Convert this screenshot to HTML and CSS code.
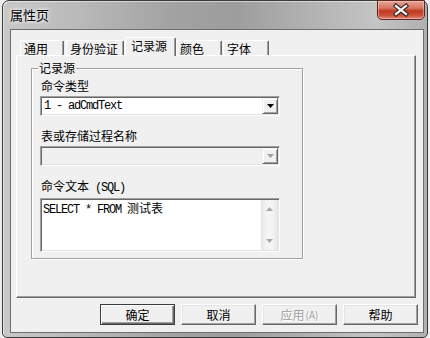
FILE: index.html
```html
<!DOCTYPE html>
<html lang="zh-CN">
<head>
    <meta charset="UTF-8">
    <title>属性页</title>
    <link rel="stylesheet" href="styles.css">
</head>
<body>
    <div class="window">
        <div class="titlebar">
            <span class="title">属性页</span>
            <div class="close">
                <svg width="46" height="18" viewBox="0 0 46 18">
                    <path d="M18 5 L28 13 M28 5 L18 13" stroke="#3a2a2a" stroke-width="4.5" stroke-linecap="square" fill="none"/>
                    <path d="M18 5 L28 13 M28 5 L18 13" stroke="#ffffff" stroke-width="2.2" stroke-linecap="square" fill="none"/>
                </svg>
            </div>
        </div>

        <div class="client">
            <div class="tabs">
                <div class="tab t1">通用</div>
                <div class="tab t2">身份验证</div>
                <div class="tab t3 active">记录源</div>
                <div class="tab t4">颜色</div>
                <div class="tab t5">字体</div>
            </div>

            <div class="panel">
                <div class="group">
                    <span class="group-title">记录源</span>

                    <div class="label">命令类型</div>
                    <div class="combo">
                        <div class="combo-text mono">1 - adCmdText</div>
                        <div class="drop">
                            <svg width="7" height="4" viewBox="0 0 7 4"><polygon points="0,0 7,0 3.5,4" fill="#000"/></svg>
                        </div>
                    </div>

                    <div class="label gap">表或存储过程名称</div>
                    <div class="combo disabled">
                        <div class="combo-text"></div>
                        <div class="drop">
                            <svg width="7" height="4" viewBox="0 0 7 4"><polygon points="0,0 7,0 3.5,4" fill="#a0a0a0"/></svg>
                        </div>
                    </div>

                    <div class="label gap">命令文本<span class="mono"> (SQL)</span></div>
                    <div class="memo">
                        <div class="memo-text"><span class="mono">SELECT * FROM </span>测试表</div>
                        <div class="scroll">
                            <svg width="7" height="4" viewBox="0 0 7 4"><polygon points="3.5,0 7,4 0,4" fill="#a8a8a8"/></svg>
                            <svg width="7" height="4" viewBox="0 0 7 4"><polygon points="0,0 7,0 3.5,4" fill="#a8a8a8"/></svg>
                        </div>
                    </div>
                </div>
            </div>

            <div class="buttons">
                <div class="btn default">确定</div>
                <div class="btn">取消</div>
                <div class="btn disabled">应用<span class="small">(A)</span></div>
                <div class="btn">帮助</div>
            </div>
        </div>
    </div>
</body>
</html>
```

FILE: styles.css
```css
* {
    box-sizing: border-box;
    margin: 0;
    padding: 0;
}

body {
    width: 430px;
    height: 338px;
    overflow: hidden;
    background: #ededed;
    font-family: "Noto Sans CJK SC", sans-serif;
    font-size: 12px;
    color: #000;
}

.mono {
    font-family: "Liberation Mono", "Noto Sans CJK SC", monospace;
    letter-spacing: -1.2px;
}

/* window frame */
.window {
    margin-left: 2px;
    width: 426px;
    height: 338px;
    border: 1px solid #3a3a3a;
    border-radius: 7px 7px 5px 5px;
    background: linear-gradient(90deg, #c8c8c8 0%, #b9b9b9 18%, #a2a2a2 40%, #9d9d9d 55%, #b5b5b5 75%, #c4c4c4 88%, #b0b0b0 100%);
    box-shadow: inset 1px 1px rgba(255, 255, 255, 0.5);
    display: flex;
    flex-direction: column;
}

.titlebar {
    height: 28px;
    display: flex;
    justify-content: space-between;
    align-items: flex-start;
}

.title {
    padding: 6px 0 0 7px;
    font-size: 13px;
    line-height: 15px;
    text-shadow: 0 0 5px #fff, 0 0 3px #fff;
}

.close {
    width: 48px;
    height: 20px;
    margin: -1px 2px 0 0;
    border: 1px solid #5a2820;
    border-radius: 0 0 5px 5px;
    background: linear-gradient(#e6a493 0%, #d57560 40%, #c0391f 55%, #cb533a 80%, #e08b74 100%);
    box-shadow: inset 0 0 0 1px rgba(255, 220, 210, 0.45);
}

.close svg {
    display: block;
}

.client {
    margin: 0 3px 0 7px;
    height: 304px;
    border: 1px solid #6e6e6e;
    background: #f0f0f0;
    padding: 7px 5px 0 5px;
}

/* tabs */
.tabs {
    height: 18px;
    display: flex;
    align-items: flex-end;
}

.tab {
    height: 15px;
    border: 1px solid;
    border-color: #fff #696969 transparent #fff;
    border-bottom: none;
    border-radius: 2px 2px 0 0;
    box-shadow: inset -1px 0 #a0a0a0;
    padding: 1px 0 0 3px;
    line-height: 13px;
    white-space: nowrap;
}

.t1 { width: 44px; margin-left: 4px; }
.t2 { width: 58px; margin-left: 2px; }
.t3 { width: 51px; margin-left: 1px; }
.t4 { width: 46px; }
.t5 { width: 46px; margin-left: 1px; }

.tab.active {
    height: 19px;
    margin-bottom: -1px;
    position: relative;
    z-index: 1;
    background: #f0f0f0;
    padding: 1px 0 0 5px;
}

.panel {
    width: 400px;
    height: 243px;
    border: 1px solid;
    border-color: #fff #696969 #696969 #fff;
    box-shadow: inset -1px -1px #a0a0a0;
    overflow: hidden;
}

/* group box */
.group {
    position: relative;
    margin: 12px 0 0 14px;
    width: 272px;
    height: 191px;
    border: 1px solid #a0a0a0;
    box-shadow: inset 1px 1px #fff, 1px 1px #fff;
    padding: 10px 0 0 8px;
}

.group-title {
    position: absolute;
    top: -8px;
    left: 6px;
    padding: 0 1px;
    background: #f0f0f0;
    line-height: 14px;
}

.label {
    margin-left: 1px;
    height: 14px;
    line-height: 14px;
    white-space: pre;
}

.label.gap {
    margin-top: 13px;
}

.combo,
.memo {
    width: 240px;
    display: flex;
    background: #fff;
    border: 1px solid;
    border-color: #a0a0a0 #fff #fff #a0a0a0;
    box-shadow: inset 1px 1px #696969, inset -1px -1px #e3e3e3;
    padding: 1px;
}

.combo {
    height: 20px;
    margin-top: 3px;
}

.combo.disabled {
    background: #f0f0f0;
}

.combo-text {
    flex: 1;
    padding-left: 2px;
    line-height: 16px;
    white-space: pre;
}

.drop {
    width: 16px;
    height: 16px;
    background: #f0f0f0;
    border: 1px solid;
    border-color: #f0f0f0 #696969 #696969 #f0f0f0;
    box-shadow: inset 1px 1px #fff, inset -1px -1px #a0a0a0;
    display: flex;
    align-items: center;
    justify-content: center;
}

.memo {
    height: 54px;
    margin-top: 5px;
}

.memo-text {
    flex: 1;
    padding: 1px 0 0 1px;
    line-height: 14px;
    white-space: pre;
}

.scroll {
    width: 17px;
    padding: 7px 0;
    display: flex;
    flex-direction: column;
    justify-content: space-between;
    align-items: center;
    background: linear-gradient(90deg, #e6e6e6 0%, #f4f4f4 35%, #f4f4f4 65%, #e6e6e6 100%);
}

/* bottom buttons */
.buttons {
    display: flex;
    justify-content: flex-end;
    gap: 6px;
    margin-top: 6px;
}

.btn {
    width: 75px;
    height: 21px;
    background: #f0f0f0;
    border: 1px solid;
    border-color: #fff #696969 #696969 #fff;
    box-shadow: inset -1px -1px #a0a0a0, inset 1px 1px #e3e3e3;
    display: flex;
    align-items: center;
    justify-content: center;
    line-height: 14px;
}

.btn.default {
    border-color: #3c3c3c;
    box-shadow: inset 1px 1px #fff, inset -1px -1px #696969, inset -2px -2px #a0a0a0;
}

.btn.disabled {
    color: #a0a0a0;
    text-shadow: 1px 1px #fff;
}

.btn .small {
    font-size: 10px;
    margin-left: 1px;
}
```
